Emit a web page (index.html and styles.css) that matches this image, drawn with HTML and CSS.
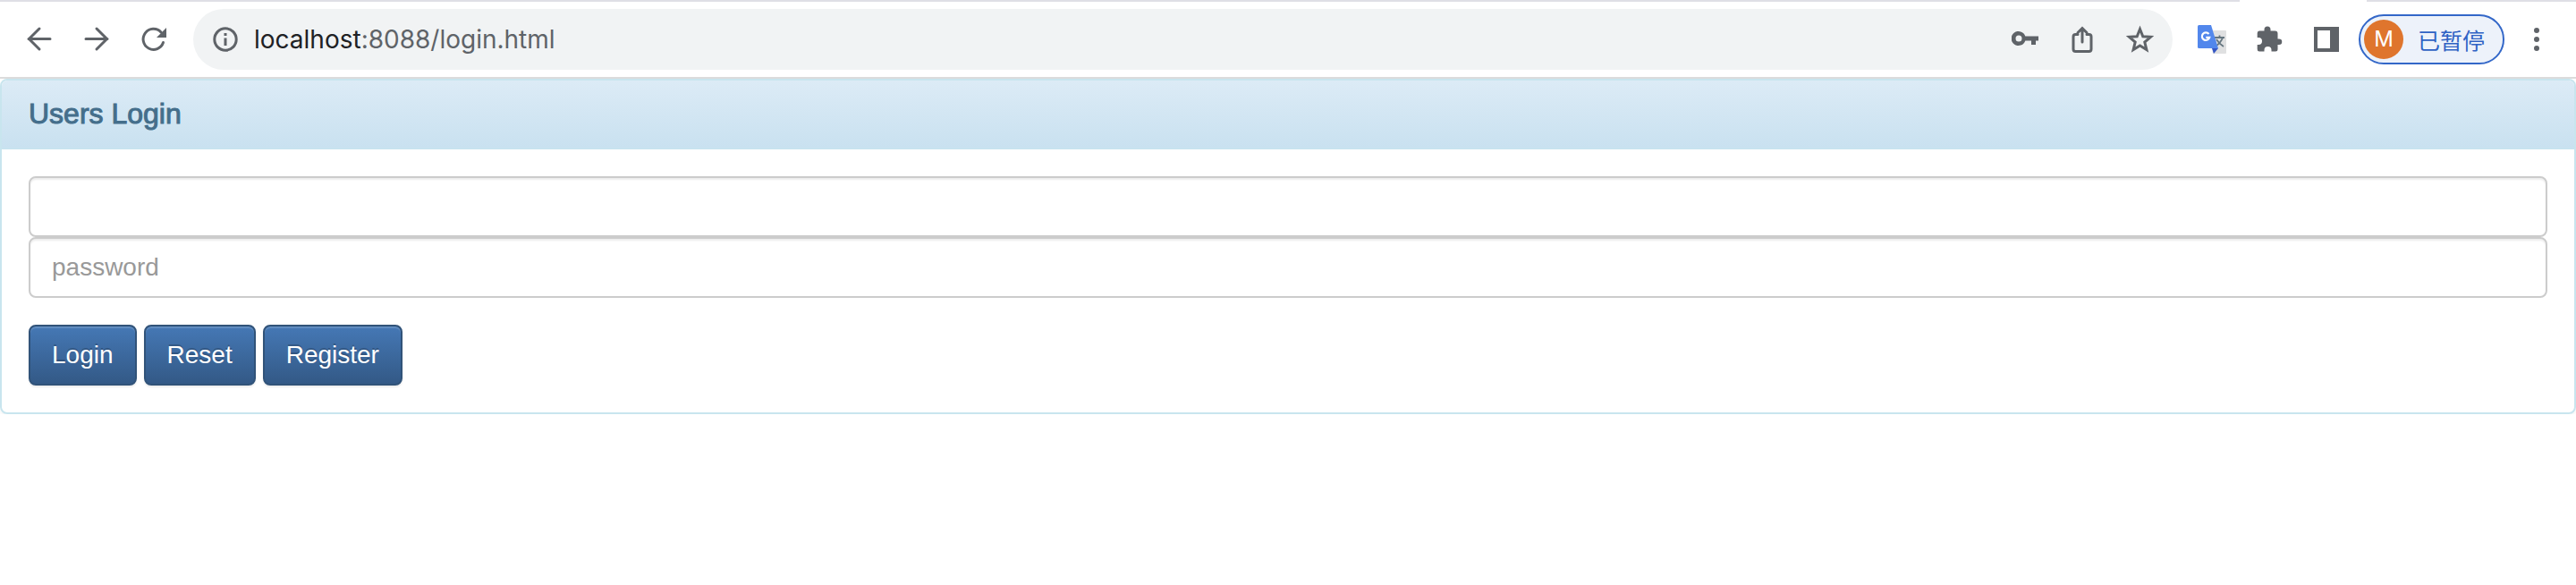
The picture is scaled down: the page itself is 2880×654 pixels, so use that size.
FILE: index.html
```html
<!DOCTYPE html>
<html lang="en">
<head>
<meta charset="utf-8">
<title>Users Login</title>
<link rel="stylesheet" href="styles.css">
</head>
<body>
<header class="browser">
  <div class="tab-strip"><span class="strip-left"></span><span class="strip-right"></span></div>
  <div class="toolbar">
    <nav class="nav-buttons">
      <button class="icon-button" aria-label="Back"><svg class="icon" viewBox="0 0 32 32"><path class="stroke" d="M28 15.500H4M16 4L4.500 15.500L16 27"/></svg></button>
      <button class="icon-button" aria-label="Forward"><svg class="icon" viewBox="0 0 32 32"><path class="stroke" d="M4 15.500H28M16 4L27.500 15.500L16 27"/></svg></button>
      <button class="icon-button" aria-label="Reload"><svg class="icon" viewBox="0 0 32 32"><path class="stroke" d="M26.500 19.500A11.500 11.500 0 1 1 24 8"/><path d="M30 3V14H19Z"/></svg></button>
    </nav>
    <div class="address-bar">
      <button class="icon-button" aria-label="Site information"><svg class="icon" viewBox="0 0 32 32"><circle class="stroke" cx="16" cy="16" r="12.200"/><path d="M14.500 9h3v3h-3zM14.500 14.500h3v8.500h-3z"/></svg></button>
      <span class="url"><span class="host">localhost</span>:8088/login.html</span>
      <div class="address-actions">
        <button class="icon-button" aria-label="Passwords"><svg class="icon" viewBox="0 0 32 32"><path fill-rule="evenodd" d="M15.300 12.500A8 8 0 1 0 15.300 17.500H22V22H27V17.500H30V12.500ZM8 11.500a3.500 3.500 0 1 1 0 7a3.500 3.500 0 1 1 0-7Z"/></svg></button>
        <button class="icon-button" aria-label="Share"><svg class="icon" viewBox="0 0 32 32"><path class="stroke thin" d="M10 10.500H7.500Q5 10.500 5 13V27Q5 29.500 7.500 29.500H22.500Q25 29.500 25 27V13Q25 10.500 22.500 10.500H20M15 19V4M10 8.500L15 3.500L20 8.500"/></svg></button>
        <button class="icon-button" aria-label="Bookmark"><svg class="icon" viewBox="0 0 32 32"><path class="stroke thin star" d="M15.500 4.500L18.800 12.700L27.500 13.300L20.800 19L22.900 27.600L15.500 23L8.100 27.600L10.200 19L3.500 13.300L12.200 12.700Z"/></svg></button>
      </div>
    </div>
    <div class="extensions">
      <button class="icon-button" aria-label="Translate"><svg class="icon" viewBox="0 0 32 32"><path fill="#dfe0e1" d="M14 6H31Q32 6 32 7V31Q32 32 31 32H17Z"/><path fill="none" stroke="#64757f" stroke-width="1.800" d="M19 14H30M24.500 11.500V14M28 14Q26 20 19.500 24M21 16Q24 21 29 24"/><path fill="#3556c4" d="M16 26H23L18 32Z"/><path fill="#5287ec" d="M1.500 0H15L23 26H1.500Q0 26 0 24.500V1.500Q0 0 1.500 0Z"/><path fill="none" stroke="#fff" stroke-width="2.200" d="M12.500 10A4.300 4.300 0 1 0 13.300 13.800H9.300"/></svg></button>
      <button class="icon-button" aria-label="Extensions"><svg class="icon" viewBox="0 0 32 32"><path d="M27 15.500H25.500V9.500Q25.500 6.500 22.500 6.500H17.500V5A3.500 3.500 0 0 0 10.500 5V6.500H5Q2.700 6.500 2.700 9V14H4A4 4 0 0 1 4 22H2.700V27Q2.700 29.500 5 29.500H10.500V28A4 4 0 0 1 18.500 28V29.500H23Q25.500 29.500 25.500 27V22H27A3.250 3.250 0 0 0 27 15.500Z"/></svg></button>
      <button class="icon-button" aria-label="Side panel"><svg class="icon" viewBox="0 0 32 32"><path fill-rule="evenodd" d="M2 2H30V30H2ZM6 6V26H20V6Z"/></svg></button>
    </div>
    <button class="profile"><span class="avatar">M</span><span class="profile-status" lang="zh">已暂停</span></button>
    <button class="icon-button" aria-label="Menu"><svg class="icon" viewBox="0 0 32 32"><circle cx="16" cy="6" r="3"/><circle cx="16" cy="16" r="3"/><circle cx="16" cy="26" r="3"/></svg></button>
  </div>
</header>
<main class="panel">
  <div class="panel-heading"><h3 class="panel-title">Users Login</h3></div>
  <form class="panel-body">
    <input class="form-control" type="text" name="username" aria-label="Username">
    <input class="form-control" type="password" name="password" placeholder="password" aria-label="Password">
    <div class="actions">
      <button class="btn" type="button">Login</button>
      <button class="btn" type="reset">Reset</button>
      <button class="btn" type="button">Register</button>
    </div>
  </form>
</main>
</body>
</html>
```
FILE: styles.css
```css
* {
  box-sizing: border-box;
}

body {
  margin: 0;
  background: #fff;
  font-family: "Liberation Sans", Arial, sans-serif;
  font-size: 28px;
  line-height: 40px;
}

button,
input {
  font: inherit;
}

.browser {
  border-bottom: 2px solid #dcdcdc;
}

.tab-strip {
  display: flex;
  justify-content: space-between;
  height: 2px;
}

.strip-left,
.strip-right {
  background: #dfdfe6;
}

.strip-left {
  flex: 1;
  margin-right: 142px;
}

.strip-right {
  width: 234px;
}

.toolbar {
  display: flex;
  align-items: center;
  padding: 8px 28px;
}

.nav-buttons,
.address-actions,
.extensions {
  display: flex;
  gap: 32px;
}

.icon-button {
  display: flex;
  flex: none;
  padding: 0;
  border: 0;
  background: none;
}

.icon {
  width: 32px;
  height: 32px;
  fill: #5f6368;
}

.stroke {
  fill: none;
  stroke: #5f6368;
  stroke-width: 3;
  stroke-linecap: round;
}

.thin {
  stroke-width: 3;
}

.star {
  stroke-linejoin: miter;
}

.address-bar {
  display: flex;
  flex: 1;
  align-items: center;
  gap: 16px;
  height: 68px;
  margin-left: 28px;
  padding: 0 20px;
  border-radius: 34px;
  background: #f1f3f4;
}

.url {
  flex: 1;
  color: #5f6368;
  font-family: Inter, sans-serif;
}

.host {
  color: #202124;
}

.extensions {
  margin-left: 28px;
}

.profile {
  display: flex;
  align-items: center;
  gap: 16px;
  height: 56px;
  margin: 0 20px;
  padding: 0 20px 0 4px;
  border: 2px solid #3367c8;
  border-radius: 28px;
  background: #edf2fa;
  color: #2f62c4;
}

.avatar {
  width: 44px;
  border-radius: 50%;
  background: #df752d;
  color: #fff;
  font-family: Inter, sans-serif;
  font-size: 24px;
  line-height: 44px;
  text-align: center;
}

.profile-status {
  font-family: "Noto Sans CJK SC", sans-serif;
  font-size: 25px;
}

.panel {
  border: 2px solid #c8e5ee;
  border-radius: 8px;
  box-shadow: 0 2px 4px rgba(0, 0, 0, 0.05);
}

.panel-heading {
  padding: 20px 30px;
  border-bottom: 2px solid #c8e3ef;
  border-radius: 6px 6px 0 0;
  background: linear-gradient(#dcebf6, #c9e1f0);
}

.panel-title {
  margin: 0;
  color: #446e8b;
  font-size: 32px;
  font-weight: 400;
  line-height: 35px;
  -webkit-text-stroke: 1px #446e8b;
}

.panel-body {
  padding: 30px;
}

.form-control {
  display: block;
  width: 100%;
  height: 68px;
  padding: 12px 24px;
  border: 2px solid #ccc;
  border-radius: 8px;
  background: #fff;
  box-shadow: inset 0 2px 2px rgba(0, 0, 0, 0.075);
  color: #555;
}

.form-control::placeholder {
  color: #999;
}

.actions {
  display: flex;
  gap: 8px;
  margin-top: 30px;
}

.btn {
  padding: 12px 24px;
  border: 2px solid #315379;
  border-radius: 8px;
  background: linear-gradient(#4578b5, #335986);
  box-shadow: inset 0 2px 0 rgba(255, 255, 255, 0.15), 0 2px 2px rgba(0, 0, 0, 0.075);
  color: #fff;
  text-shadow: 0 -2px 0 rgba(0, 0, 0, 0.2);
}
```
